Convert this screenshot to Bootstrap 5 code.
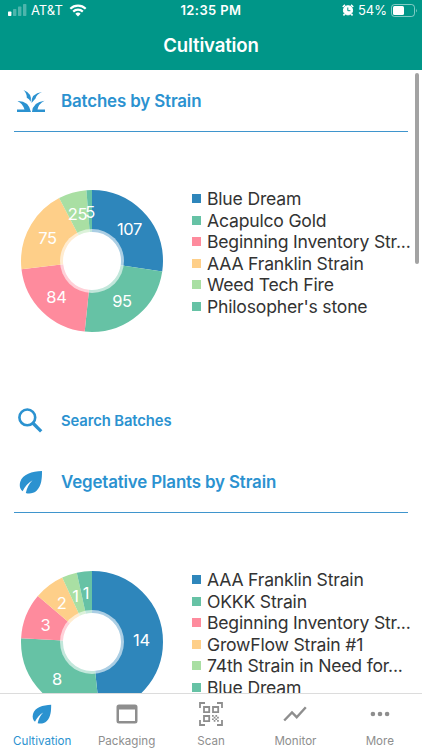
<!DOCTYPE html>
<html lang="en">
<head>
<meta charset="utf-8">
<meta name="viewport" content="width=device-width, initial-scale=1">
<title>Cultivation</title>
<link rel="stylesheet" href="https://cdn.jsdelivr.net/npm/bootstrap@5.3.0/dist/css/bootstrap.min.css">
<style>
  body { font-family: Inter, "Liberation Sans", sans-serif; color: #333; height: 750px; }
  svg { display: block; flex: none; }
  .top-bar { background: #009688; height: 70px; }
  .status { height: 20px; font-size: 13px; line-height: 20px; }
  .status-side { width: 150px; }
  .clock { letter-spacing: .4px; }
  .wifi { margin-left: 6px; }
  .page-title { font-size: 18.6px; font-weight: 600; line-height: 51px; letter-spacing: -.17px; }
  .sec-head { height: 62px; margin: 0 14px; padding-top: 1px; border-bottom: 1.5px solid #3f95cd; font-size: 16.9px; font-weight: 600; letter-spacing: -.14px; }
  .sec-link { height: 62px; margin: 0 14px -1px; font-size: 14.8px; font-weight: 600; letter-spacing: -.1px; }
  .icon-cell { width: 47px; padding-left: 2px; }
  .chart-row { height: 258px; padding-left: 21px; }
  .donut { width: 142px; height: 142px; }
  .donut .slice { fill: none; stroke-width: 42; }
  .donut text { fill: #fff; font-size: 16.5px; text-anchor: middle; letter-spacing: -.3px; }
  .legend-list { margin: -17px 0 0 29px; font-size: 17.6px; letter-spacing: -.2px; color: #333; }
  .legend-list li { height: 21.5px; line-height: 21.5px; white-space: nowrap; }
  .swatch { width: 9px; height: 9px; margin-right: 6px; flex: none; }
  .scroll-thumb { right: 3px; top: 3px; width: 4px; height: 191px; background: #a3a3a3; }
  .tabs { height: 57px; border-top: 1px solid #dcdcdc; }
  .tab { color: #8e8e8e; font-size: 11.6px; line-height: 15px; }
  .tab-icon { height: 40px; }
  .brand { color: #2b92d0; }
</style>
<script src="https://cdn.jsdelivr.net/npm/bootstrap@5.3.0/dist/js/bootstrap.bundle.min.js"></script>
</head>
<body class="d-flex flex-column overflow-hidden bg-white">
<svg width="0" height="0" class="position-absolute">
  <symbol id="leaf" viewBox="0 0 24 24"><path fill="currentColor" d="M23 1C13 1.500 3.500 4 1.200 12c-1.200 4.500.3 7.500 2.400 9.200C5.800 16.500 9 13 13.500 10.200 10 14 8 17.500 6.800 23c3 1 7.700.8 11-2.500C22.500 15.500 23 9 23 1z"/></symbol>
</svg>

<header class="top-bar text-white flex-shrink-0">
  <div class="status d-flex justify-content-between">
    <div class="status-side d-flex align-items-center ps-2">
      <svg width="19" height="12" viewBox="0 0 19 12" fill="#fff"><rect y="7.500" width="3.400" height="4.500" rx=".7"/><g opacity=".3"><rect x="5" y="5" width="3.400" height="7" rx=".7"/><rect x="10" y="2.500" width="3.400" height="9.500" rx=".7"/><rect x="15" width="3.400" height="12" rx=".7"/></g></svg>
      <span class="ms-1">AT&amp;T</span>
      <svg class="wifi" width="18" height="13" viewBox="0 0 18 13" fill="none" stroke="#fff" stroke-width="2.200"><path d="M1.300 4.700a11 11 0 0 1 15.400 0M4.200 7.600a6.900 6.900 0 0 1 9.600 0"/><path d="M9 12.500 6.300 9.800a3.900 3.900 0 0 1 5.400 0z" fill="#fff" stroke="none"/></svg>
    </div>
    <span class="clock fw-semibold">12:35 PM</span>
    <div class="status-side d-flex align-items-center justify-content-end pe-1">
      <svg width="12" height="12" viewBox="0 0 12 12" fill="none" stroke="#fff"><circle cx="6" cy="6.300" r="4.600" fill="#fff"/><path d="M.8 3 3 .9M11.200 3 9 .9M2.600 10 1.500 11.500M9.400 10l1.100 1.500" stroke-width="1.700"/><path d="M5.800 3.500v3.200h2.600" stroke="#009688" stroke-width="1"/></svg>
      <span class="ms-1">54%</span>
      <svg class="ms-1" width="27" height="13" viewBox="0 0 27 13"><rect x=".5" y=".5" width="23" height="12" rx="3" fill="none" stroke="#fff" opacity=".5"/><rect x="2" y="2" width="11" height="9" rx="1.500" fill="#fff"/><path d="M25 4.500q1.600 2 0 4z" fill="#fff" opacity=".5"/></svg>
    </div>
  </div>
  <h1 class="page-title text-center m-0">Cultivation</h1>
</header>

<main class="flex-grow-1 overflow-hidden position-relative">
  <div class="scroll-thumb position-absolute rounded-pill"></div>

  <h2 class="sec-head brand d-flex align-items-center mb-0">
    <span class="icon-cell"><svg width="30" height="24" viewBox="0 0 30 24" fill="currentColor"><path d="M1 23v-2.600h7.500Q6.500 14.500 1.500 12 12.500 11.500 15 23zM16 23Q17 13 28.500 11.800 22.500 15 21.500 20.400H29V23zM7.500 1q9 3.500 7.200 11.800Q13.200 9.800 10.800 8.800 11 4.500 7.500 1zM26 3q-5.500 2.300-6.500 6.500l-4 4.500Q15 4.500 26 3z"/></svg></span>
    <span>Batches by Strain</span>
  </h2>
  <div class="chart-row d-flex align-items-center">
    <svg class="donut" viewBox="-71 -71 142 142">
      <g transform="rotate(-90)">
        <circle class="slice" r="50" pathLength="391" stroke="#2e86bb" stroke-dasharray="107 284"/>
        <circle class="slice" r="50" pathLength="391" stroke="#66c2a5" stroke-dasharray="95 296" stroke-dashoffset="-107"/>
        <circle class="slice" r="50" pathLength="391" stroke="#fe8b9d" stroke-dasharray="84 307" stroke-dashoffset="-202"/>
        <circle class="slice" r="50" pathLength="391" stroke="#fecf89" stroke-dasharray="75 316" stroke-dashoffset="-286"/>
        <circle class="slice" r="50" pathLength="391" stroke="#a9dfa3" stroke-dasharray="25 366" stroke-dashoffset="-361"/>
        <circle class="slice" r="50" pathLength="391" stroke="#66c2a5" stroke-dasharray="5 386" stroke-dashoffset="-386"/>
      </g>
      <circle r="32" fill="#fff" opacity=".6"/><circle r="28.500" fill="#fff"/>
      <text x="37.500" y="-26">107</text><text x="30" y="46">95</text><text x="-35.500" y="42">84</text><text x="-44.500" y="-17">75</text><text x="-14.500" y="-41.500">25</text><text x="-2" y="-43.500">5</text>
    </svg>
    <ul class="legend-list list-unstyled">
      <li class="d-flex align-items-center"><i class="swatch" style="background:#2e86bb"></i>Blue Dream</li>
      <li class="d-flex align-items-center"><i class="swatch" style="background:#66c2a5"></i>Acapulco Gold</li>
      <li class="d-flex align-items-center"><i class="swatch" style="background:#fe8b9d"></i>Beginning Inventory Str...</li>
      <li class="d-flex align-items-center"><i class="swatch" style="background:#fecf89"></i>AAA Franklin Strain</li>
      <li class="d-flex align-items-center"><i class="swatch" style="background:#a9dfa3"></i>Weed Tech Fire</li>
      <li class="d-flex align-items-center"><i class="swatch" style="background:#66c2a5"></i>Philosopher's stone</li>
    </ul>
  </div>

  <a class="sec-link brand d-flex align-items-center text-decoration-none" href="#">
    <span class="icon-cell"><svg width="28" height="26" viewBox="0 0 28 26" fill="none" stroke="currentColor"><circle cx="11.300" cy="9.400" r="7.900" stroke-width="2.600"/><path d="m16.800 15 8.400 8.300" stroke-width="3.300"/></svg></span>
    <span>Search Batches</span>
  </a>

  <h2 class="sec-head brand d-flex align-items-center mb-0">
    <span class="icon-cell"><svg width="29" height="24" viewBox="-3 0 29 24"><use href="#leaf" width="24" height="24"/></svg></span>
    <span>Vegetative Plants by Strain</span>
  </h2>
  <div class="chart-row d-flex align-items-center">
    <svg class="donut" viewBox="-71 -71 142 142">
      <g transform="rotate(-90)">
        <circle class="slice" r="50" pathLength="29" stroke="#2e86bb" stroke-dasharray="14 15"/>
        <circle class="slice" r="50" pathLength="29" stroke="#66c2a5" stroke-dasharray="8 21" stroke-dashoffset="-14"/>
        <circle class="slice" r="50" pathLength="29" stroke="#fe8b9d" stroke-dasharray="3 26" stroke-dashoffset="-22"/>
        <circle class="slice" r="50" pathLength="29" stroke="#fecf89" stroke-dasharray="2 27" stroke-dashoffset="-25"/>
        <circle class="slice" r="50" pathLength="29" stroke="#a9dfa3" stroke-dasharray="1 28" stroke-dashoffset="-27"/>
        <circle class="slice" r="50" pathLength="29" stroke="#66c2a5" stroke-dasharray="1 28" stroke-dashoffset="-28"/>
      </g>
      <circle r="32" fill="#fff" opacity=".6"/><circle r="28.500" fill="#fff"/>
      <text x="49.500" y="4">14</text><text x="-35" y="43">8</text><text x="-46.500" y="-11.500">3</text><text x="-30.500" y="-33">2</text><text x="-16.500" y="-40.500">1</text><text x="-6" y="-43">1</text>
    </svg>
    <ul class="legend-list list-unstyled">
      <li class="d-flex align-items-center"><i class="swatch" style="background:#2e86bb"></i>AAA Franklin Strain</li>
      <li class="d-flex align-items-center"><i class="swatch" style="background:#66c2a5"></i>OKKK Strain</li>
      <li class="d-flex align-items-center"><i class="swatch" style="background:#fe8b9d"></i>Beginning Inventory Str...</li>
      <li class="d-flex align-items-center"><i class="swatch" style="background:#fecf89"></i>GrowFlow Strain #1</li>
      <li class="d-flex align-items-center"><i class="swatch" style="background:#a9dfa3"></i>74th Strain in Need for...</li>
      <li class="d-flex align-items-center"><i class="swatch" style="background:#66c2a5"></i>Blue Dream</li>
    </ul>
  </div>
</main>

<nav class="tabs row g-0 bg-white flex-shrink-0 text-center">
  <a class="tab brand col text-decoration-none" href="#"><span class="tab-icon d-flex align-items-center justify-content-center"><svg width="20" height="20"><use href="#leaf"/></svg></span>Cultivation</a>
  <a class="tab col text-decoration-none" href="#"><span class="tab-icon d-flex align-items-center justify-content-center"><svg width="22" height="20" viewBox="0 0 22 20"><path fill="currentColor" fill-rule="evenodd" d="M3 .5h16a2.500 2.500 0 0 1 2.500 2.500v14a2.500 2.500 0 0 1-2.500 2.500H3A2.500 2.500 0 0 1 .5 17V3A2.500 2.500 0 0 1 3 .5zm0 5V17h16V5.500z"/></svg></span>Packaging</a>
  <a class="tab col text-decoration-none" href="#"><span class="tab-icon d-flex align-items-center justify-content-center"><svg width="24" height="24" viewBox="0 0 24 24" fill="none" stroke="currentColor" stroke-width="1.800"><path d="M1 6V1h5M18 1h5v5M23 18v5h-5M6 23H1v-5"/><path d="M5 5h5.200v5.200H5zM14 5h5.200v5.200H14zM5 14h5.200v5.200H5z"/><path stroke="none" fill="currentColor" d="M13 13h1.700v1.700H13zM16.400 13h1.700v1.700h-1.700zM14.700 14.700h1.700v1.700h-1.700zM18.100 14.700h1.700v1.700h-1.700zM13 16.400h1.700v1.700H13zM16.400 16.400h1.700v1.700h-1.700zM14.700 18.100h1.700v1.700h-1.700zM18.100 18.100h1.700v1.700h-1.700z"/></svg></span>Scan</a>
  <a class="tab col text-decoration-none" href="#"><span class="tab-icon d-flex align-items-center justify-content-center"><svg width="24" height="16" viewBox="0 0 24 16" fill="none" stroke="currentColor" stroke-width="2.400"><path d="m1.200 14.500 7.800-8 4.700 4.700L22.800 1.200"/></svg></span>Monitor</a>
  <a class="tab col text-decoration-none" href="#"><span class="tab-icon d-flex align-items-center justify-content-center"><svg width="20" height="6" viewBox="0 0 20 6" fill="currentColor"><circle cx="2.900" cy="3" r="2.300"/><circle cx="10" cy="3" r="2.300"/><circle cx="17.100" cy="3" r="2.300"/></svg></span>More</a>
</nav>
</body>
</html>
